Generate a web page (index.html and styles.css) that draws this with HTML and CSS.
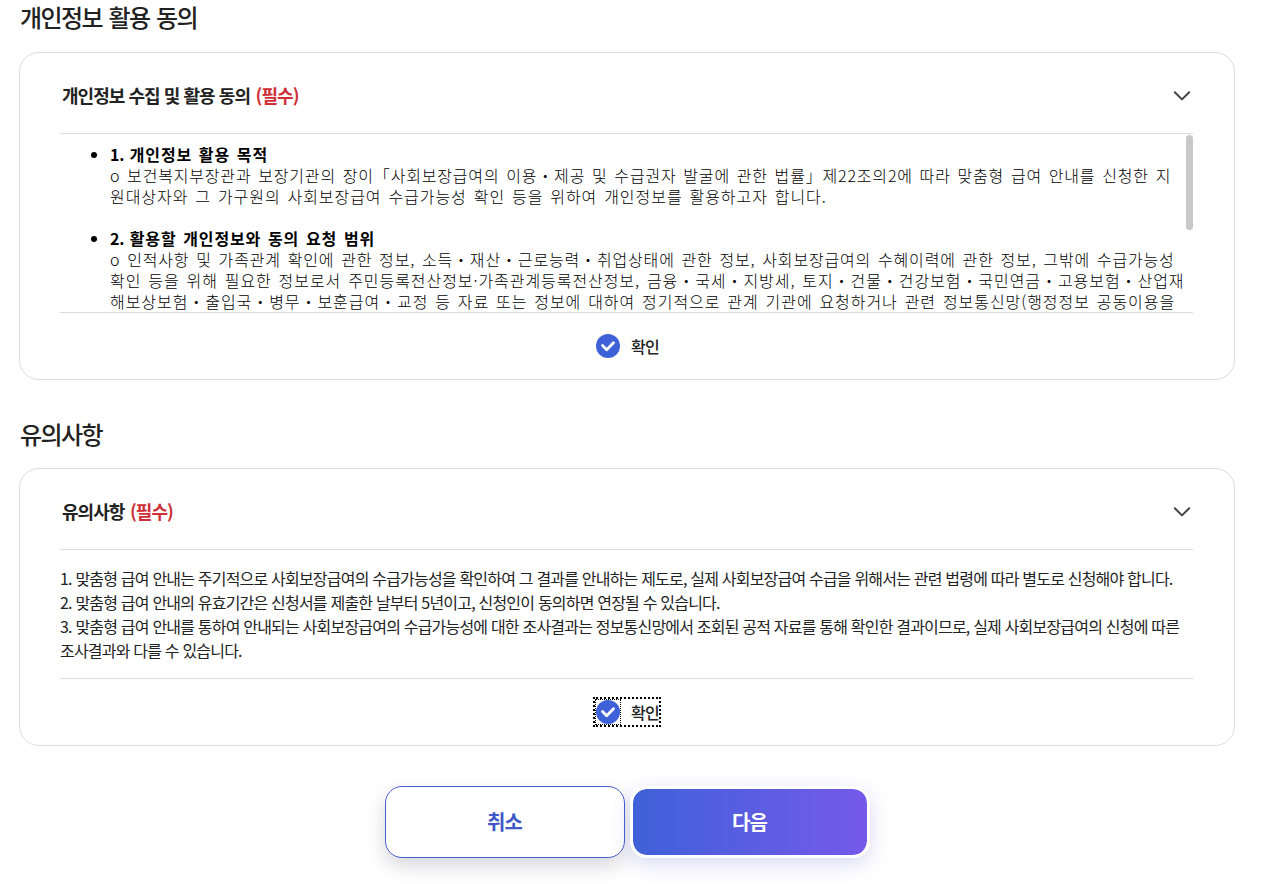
FILE: index.html
```html
<!DOCTYPE html>
<html lang="ko">
<head>
<meta charset="utf-8">
<title>개인정보 활용 동의</title>
<link rel="stylesheet" href="styles.css">
</head>
<body>
<main class="page">
  <h2 class="heading">개인정보 활용 동의</h2>
  <section class="card">
    <header class="card-head">
      <h3 class="card-title">개인정보 수집 및 활용 동의 <em class="required">(필수)</em></h3>
      <svg class="chevron" viewBox="0 0 18 12" width="18" height="12"><path d="M1.8 2.2 L9 9.4 L16.2 2.2"/></svg>
    </header>
    <div class="terms">
      <ul class="terms-list">
        <li><b><span class="num">1. </span>개인정보 활용 목적</b><br><span class="l1">o 보건복지부장관과 보장기관의 장이「사회보장급여의 이용・제공 및 수급권자 발굴에 관한 법률」제22조의2에 따라 맞춤형 급여 안내를 신청한 지</span><br><span class="l2">원대상자와 그 가구원의 사회보장급여 수급가능성 확인 등을 위하여 개인정보를 활용하고자 합니다.</span></li>
        <li><b><span class="num">2. </span>활용할 개인정보와 동의 요청 범위</b><br><span class="l3">o 인적사항 및 가족관계 확인에 관한 정보, 소득・재산・근로능력・취업상태에 관한 정보, 사회보장급여의 수혜이력에 관한 정보, 그밖에 수급가능성</span><br><span class="l4">확인 등을 위해 필요한 정보로서 주민등록전산정보·가족관계등록전산정보, 금융・국세・지방세, 토지・건물・건강보험・국민연금・고용보험・산업재</span><br><span class="l5">해보상보험・출입국・병무・보훈급여・교정 등 자료 또는 정보에 대하여 정기적으로 관계 기관에 요청하거나 관련 정보통신망(행정정보 공동이용을</span></li>
      </ul>
      <div class="scroll-thumb"></div>
    </div>
    <div class="confirm-row">
      <label class="confirm"><span class="check"><svg viewBox="0 0 24 24" width="24" height="24"><circle cx="12" cy="12" r="12"/><path d="M6.5 11.6 L10.7 15.7 L17.5 8.8"/></svg></span><span class="confirm-text">확인</span></label>
    </div>
  </section>

  <h2 class="heading second">유의사항</h2>
  <section class="card">
    <header class="card-head">
      <h3 class="card-title">유의사항 <em class="required">(필수)</em></h3>
      <svg class="chevron" viewBox="0 0 18 12" width="18" height="12"><path d="M1.8 2.2 L9 9.4 L16.2 2.2"/></svg>
    </header>
    <div class="notice">1. 맞춤형 급여 안내는 주기적으로 사회보장급여의 수급가능성을 확인하여 그 결과를 안내하는 제도로, 실제 사회보장급여 수급을 위해서는 관련 법령에 따라 별도로 신청해야 합니다.<br>2. 맞춤형 급여 안내의 유효기간은 신청서를 제출한 날부터 5년이고, 신청인이 동의하면 연장될 수 있습니다.<br>3. 맞춤형 급여 안내를 통하여 안내되는 사회보장급여의 수급가능성에 대한 조사결과는 정보통신망에서 조회된 공적 자료를 통해 확인한 결과이므로, 실제 사회보장급여의 신청에 따른<br>조사결과와 다를 수 있습니다.</div>
    <div class="confirm-row">
      <label class="confirm focused"><span class="check"><svg viewBox="0 0 24 24" width="24" height="24"><circle cx="12" cy="12" r="12"/><path d="M6.5 11.6 L10.7 15.7 L17.5 8.8"/></svg></span><span class="confirm-text">확인</span></label>
    </div>
  </section>

  <div class="actions">
    <button class="btn cancel">취소</button>
    <button class="btn next">다음</button>
  </div>
</main>
</body>
</html>
```

FILE: styles.css
```css
* { box-sizing: border-box; }
body {
  margin: 0;
  background: #fff;
  color: #222;
  font-family: "Noto Sans CJK KR", "Noto Sans", sans-serif;
  letter-spacing: -0.05em;
}
.page { width: 1216px; height: 884px; margin-left: 19px; }
.heading {
  margin: 0;
  height: 52px;
  padding-left: 1px;
  font-size: 24px;
  font-weight: 500;
  line-height: 34px;
  letter-spacing: -1.6px;
  word-spacing: 1.5px;
}
.heading.second { margin-top: 36px; line-height: 36px; }
.card {
  border: 1px solid #ddd;
  border-radius: 20px;
  padding: 0 41px 0 40px;
  background: #fff;
}
.card-head {
  display: flex;
  align-items: center;
  justify-content: space-between;
  height: 81px;
  padding: 5px 2px 0 2px;
  border-bottom: 1px solid #ddd;
}
.card-title { margin: 0; padding-bottom: 2px; font-size: 18px; font-weight: 700; line-height: 28px; letter-spacing: -0.053em; }
.required { margin-left: 1.5px; font-style: normal; font-weight: 600; color: #cf2f37; }
.chevron { fill: none; stroke: #444; stroke-width: 2; stroke-linecap: round; stroke-linejoin: round; }
.terms {
  display: flex;
  justify-content: space-between;
  height: 179px;
  border-bottom: 1px solid #ddd;
  overflow: hidden;
}
.terms-list {
  margin: 0;
  padding: 10px 0 0 50px;
  font-size: 16px;
  font-weight: 300;
  line-height: 21px;
  letter-spacing: 1px;
  word-spacing: 1.5px;
  color: #000;
  white-space: nowrap;
  width: 1125px;
}
.terms-list li + li { margin-top: 21px; }
.terms-list b { font-weight: 600; letter-spacing: .85px; }
.num { letter-spacing: -.3px; }
.l1 { letter-spacing: .82px; }
.l2 { letter-spacing: .95px; }
.l3 { letter-spacing: .84px; }
.l4 { letter-spacing: .94px; }
.l5 { letter-spacing: .94px; }
.scroll-thumb { flex: none; width: 7px; height: 95px; margin: 1px 0 0 0; border-radius: 4px; background: #c9c9c9; }
.notice {
  height: 129px;
  padding-top: 16px;
  border-bottom: 1px solid #ddd;
  font-size: 16px;
  line-height: 24px;
  white-space: nowrap;
}
.confirm-row { display: flex; justify-content: center; align-items: center; height: 66px; padding-left: 1px; }
.confirm {
  display: flex;
  align-items: center;
  width: 64px;
  height: 26px;
  padding-left: 1px;
  font-size: 16px;
  font-weight: 500;
  white-space: nowrap;
}
.focused { outline: 2px dotted #000; }
.check { display: block; flex: none; width: 24px; height: 24px; margin-right: 11px; }
.focused .check { outline: 1px dotted #000; }
.check svg { display: block; }
.check circle { fill: #3f61d8; }
.check path { fill: none; stroke: #fff; stroke-width: 2.8; stroke-linecap: round; stroke-linejoin: round; }
.actions { display: flex; justify-content: center; gap: 5px; margin-top: 40px; }
.btn {
  width: 240px;
  height: 72px;
  padding: 0 0 2px;
  border-radius: 17px;
  font-family: inherit;
  font-size: 20px;
  font-weight: 700;
  letter-spacing: -0.05em;
}
.cancel { border: 1px solid #4660cc; background: #fff; color: #4058c8; box-shadow: 0 8px 20px rgba(0, 0, 40, .16); }
.next {
  border: 3px solid #fff;
  background: linear-gradient(90deg, #3f61d8, #755aea) padding-box;
  color: #fff;
  box-shadow: 0 6px 20px rgba(70, 60, 200, .2);
}
```
